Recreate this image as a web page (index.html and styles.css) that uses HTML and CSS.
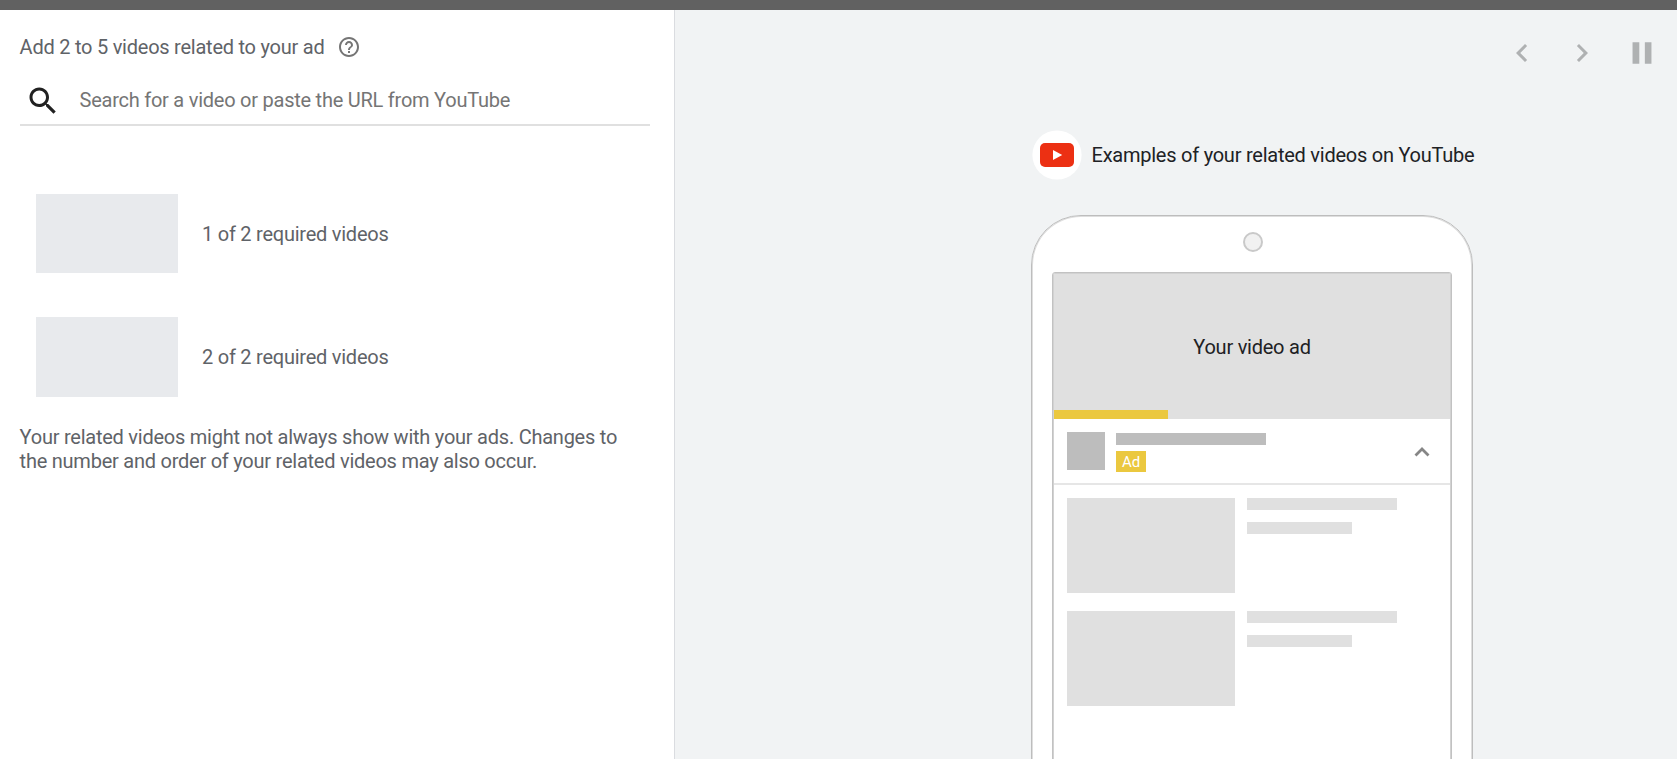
FILE: index.html
```
<!DOCTYPE html>
<html lang="en">
<head>
<meta charset="utf-8">
<title>Related videos</title>
<link rel="stylesheet" href="styles.css">
</head>
<body>
<div class="topbar"></div>
<main class="layout">
  <section class="editor">
    <div class="heading">
      <span>Add 2 to 5 videos related to your ad</span>
      <svg class="help" viewBox="0 0 24 24"><path d="M11 18h2v-2h-2v2zm1-16C6.480 2 2 6.480 2 12s4.480 10 10 10 10-4.480 10-10S17.520 2 12 2zm0 18c-4.410 0-8-3.590-8-8s3.590-8 8-8 8 3.590 8 8-3.590 8-8 8zm0-14c-2.210 0-4 1.790-4 4h2c0-1.100.9-2 2-2s2 .9 2 2c0 2-3 1.750-3 5h2c0-2.250 3-2.500 3-5 0-2.210-1.790-4-4-4z"/></svg>
    </div>
    <div class="search">
      <svg class="search-icon" viewBox="0 0 24 24"><path d="M15.500 14h-.79l-.28-.27C15.410 12.590 16 11.110 16 9.500 16 5.910 13.090 3 9.500 3S3 5.910 3 9.500 5.910 16 9.500 16c1.610 0 3.090-.59 4.230-1.570l.27.28v.79l5 4.990L20.490 19l-4.990-5zm-6 0C7.010 14 5 11.990 5 9.500S7.010 5 9.500 5 14 7.010 14 9.500 11.990 14 9.500 14z"/></svg>
      <span>Search for a video or paste the URL from YouTube</span>
    </div>
    <div class="slots">
      <div class="slot"><div class="slot-thumb"></div><span>1 of 2 required videos</span></div>
      <div class="slot"><div class="slot-thumb tall"></div><span>2 of 2 required videos</span></div>
    </div>
    <p class="note">Your related videos might not always show with your ads. Changes to<br>the number and order of your related videos may also occur.</p>
  </section>
  <section class="preview">
    <div class="controls">
      <svg viewBox="0 0 24 24"><path d="M15.410 7.410L14 6l-6 6 6 6 1.410-1.410L10.830 12z"/></svg>
      <svg viewBox="0 0 24 24"><path d="M10 6L8.590 7.410 13.170 12l-4.580 4.590L10 18l6-6z"/></svg>
      <svg viewBox="0 0 24 24"><path d="M5.700 4.900h4.500v14.300H5.700zM13.900 4.900h4.400v14.300h-4.400z"/></svg>
    </div>
    <div class="caption">
      <svg class="logo" viewBox="0 0 50 50">
        <circle cx="25" cy="25" r="24.600" fill="#fff"/>
        <rect x="8" y="13" width="34" height="24" rx="5" fill="#ec3013"/>
        <path d="M21 20v10l9.200-5z" fill="#fff"/>
      </svg>
      <span>Examples of your related videos on YouTube</span>
    </div>
    <div class="phone">
      <div class="camera"></div>
      <div class="screen">
        <div class="video"><span>Your video ad</span><div class="progress"></div></div>
        <div class="ad-row">
          <div class="avatar"></div>
          <div class="ad-info"><div class="ad-title"></div><div class="badge">Ad</div></div>
          <svg class="caret" viewBox="0 0 16 12"><path d="M1.500 9.600L8 3.100l6.500 6.500" fill="none" stroke="#868686" stroke-width="2.800"/></svg>
        </div>
        <div class="related">
          <div class="item"><div class="thumb"></div><div class="lines"><div class="line"></div><div class="line short"></div></div></div>
          <div class="item"><div class="thumb"></div><div class="lines"><div class="line"></div><div class="line short"></div></div></div>
        </div>
      </div>
    </div>
  </section>
</main>
</body>
</html>
```
FILE: styles.css
```
* { box-sizing: border-box; }
body {
  margin: 0;
  height: 759px;
  overflow: hidden;
  background: #fff;
  color: #5f6368;
  font: 20px/24px Roboto, sans-serif;
  letter-spacing: -0.24px;
  white-space: nowrap;
}
svg { display: block; flex: none; }
.topbar { height: 10px; background: #616161; }
.layout { display: flex; height: 749px; }

.editor {
  width: 675px;
  flex: none;
  padding: 25px 24px 0 20px;
  border-right: 1px solid #dadce0;
}
.heading { display: flex; align-items: center; gap: 12px; height: 24px; }
.heading span { width: 305px; text-indent: -0.400px; }
.help { width: 24px; height: 24px; fill: #757575; }
.search {
  display: flex;
  align-items: center;
  height: 53px;
  margin-top: 14px;
  padding: 3px 0 0 5px;
  gap: 18.500px;
  border-bottom: 2px solid #e0e0e0;
  color: #757575;
}
.search-icon { width: 36px; height: 36px; margin-top: 1px; fill: #212121; }
.slots { display: flex; flex-direction: column; gap: 44px; padding: 68px 0 0 16px; }
.slot { display: flex; align-items: center; gap: 24px; }
.slot-thumb { width: 142px; height: 79px; background: #e8eaed; }
.slot-thumb.tall { height: 80px; }
.note { margin: 28px 0 0 -0.400px; }

.preview { flex: 1; background: #f1f3f4; overflow: hidden; }
.controls { display: flex; justify-content: flex-end; gap: 24px; padding: 25px 17px 0 0; }
.controls svg { width: 36px; height: 36px; fill: #afb1b2; }
.caption { display: flex; align-items: center; gap: 9.500px; margin: 59px 0 0 357px; height: 50px; color: #202124; }
.logo { width: 50px; height: 50px; }

.phone {
  display: flex;
  flex-direction: column;
  align-items: center;
  width: 442px;
  height: 600px;
  margin: 35px 0 0 356px;
  padding-top: 16px;
  border: 1px solid #bdbdbd;
  border-radius: 50px 50px 0 0;
  box-shadow: inset 0 0 0 1px #dedede;
  background: #fff;
}
.camera { width: 20px; height: 20px; margin-left: 1px; border: 2px solid #c9c9c9; border-radius: 50%; background: #f1f1f1; }
.screen {
  width: 400px;
  height: 540px;
  margin-top: 20px;
  padding: 1px;
  border: 1px solid #c2c2c2;
  border-radius: 3px 3px 0 0;
  box-shadow: inset 0 0 0 1px #d2d2d2;
}
.video {
  display: flex;
  flex-direction: column;
  align-items: center;
  height: 145px;
  padding-top: 61px;
  background: #e0e0e0;
  color: #202124;
}
.progress { align-self: flex-start; width: 114px; height: 9px; margin: 51px 0 0 -0.500px; background: #ebc83f; }
.ad-row { display: flex; height: 66px; padding: 13px 20px 0 13px; border-bottom: 2px solid #e6e6e6; }
.avatar { width: 38px; height: 38px; background: #bdbdbd; }
.ad-info { margin-left: 11px; }
.ad-title { width: 150px; height: 12px; margin-top: 0.500px; background: #bdbdbd; }
.badge {
  width: 30px;
  height: 21px;
  margin-top: 6.500px;
  background: #ebc83f;
  color: #fff;
  font-size: 15px;
  letter-spacing: 0;
  line-height: 22px;
  text-align: center;
}
.caret { width: 16px; height: 12px; margin: 14px 0 0 auto; }
.related { display: flex; flex-direction: column; gap: 18px; padding: 13px; }
.item { display: flex; gap: 12px; }
.thumb { width: 168px; height: 94.500px; background: #e0e0e0; }
.item + .item { margin-top: 0.500px; }
.lines { display: flex; flex-direction: column; gap: 12px; }
.line { width: 150px; height: 12px; background: #e0e0e0; }
.line.short { width: 105px; }
```
